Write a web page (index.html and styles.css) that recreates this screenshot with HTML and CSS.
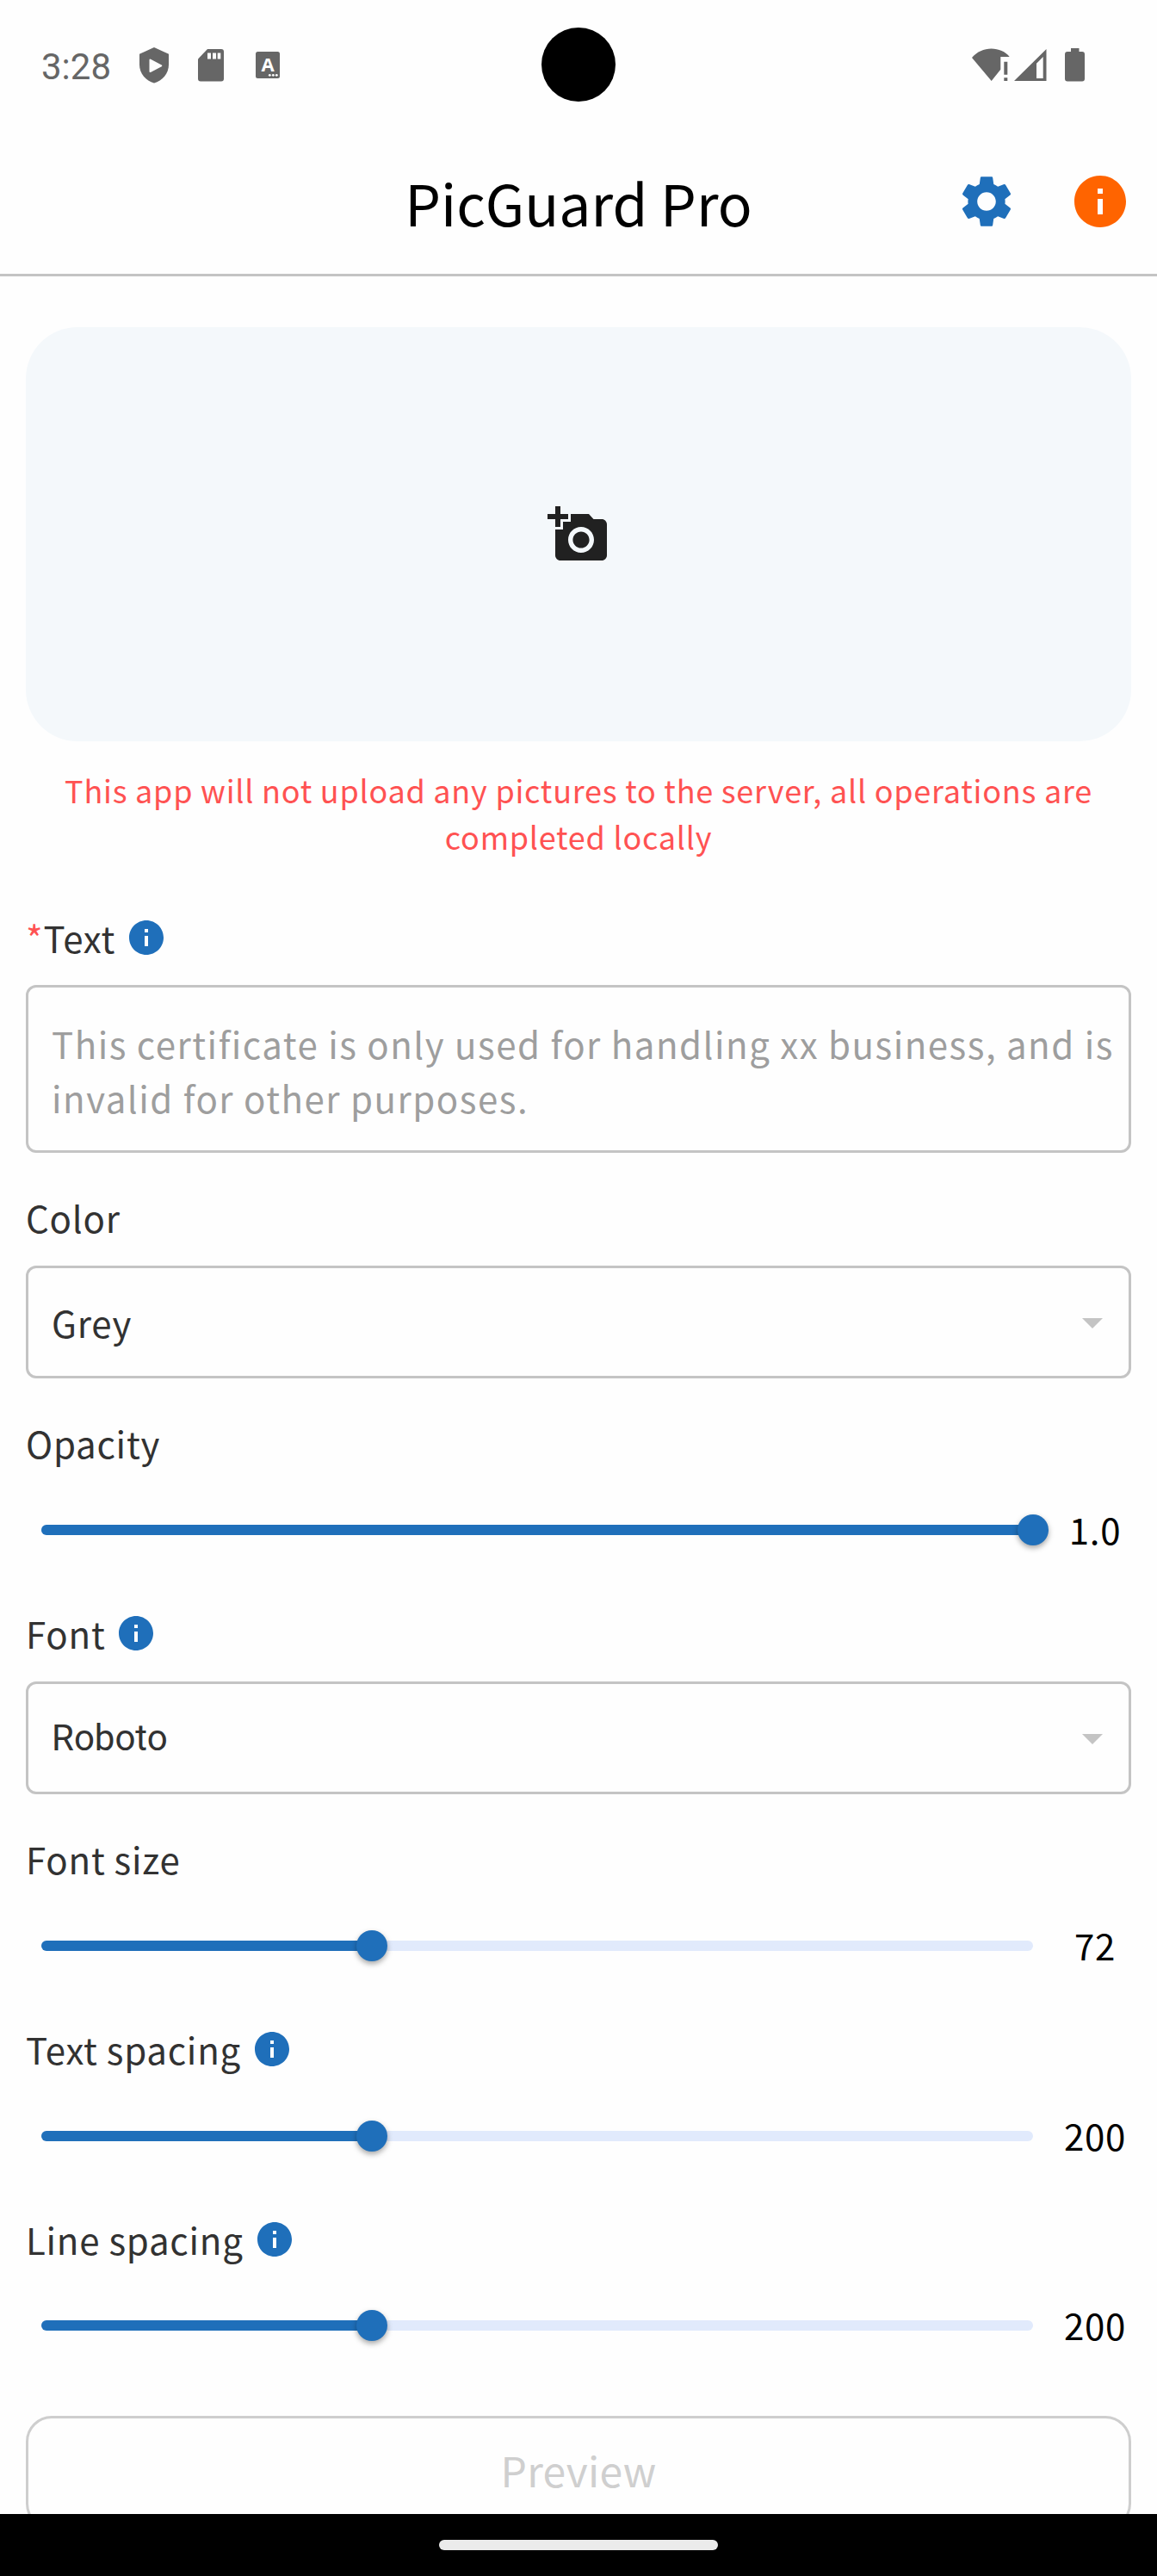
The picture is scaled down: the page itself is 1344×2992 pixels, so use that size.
FILE: index.html
```
<!DOCTYPE html>
<html lang="en">
<head>
<meta charset="utf-8">
<title>PicGuard Pro</title>
<link rel="stylesheet" href="styles.css">
</head>
<body>
<svg class="defs" aria-hidden="true">
  <symbol id="info" viewBox="0 0 24 24"><path d="M12 2C6.48 2 2 6.48 2 12s4.48 10 10 10 10-4.48 10-10S17.52 2 12 2zm1 15h-2v-6h2v6zm0-8h-2V7h2v2z"/></symbol>
  <symbol id="gear" viewBox="0 0 24 24"><path d="M19.14,12.94c0.04-0.3,0.06-0.61,0.06-0.94c0-0.32-0.02-0.64-0.07-0.94l2.03-1.58c0.18-0.14,0.23-0.41,0.12-0.61l-1.92-3.32c-0.12-0.22-0.37-0.29-0.59-0.22l-2.39,0.96c-0.5-0.38-1.03-0.7-1.62-0.94L14.4,2.81c-0.04-0.24-0.24-0.41-0.48-0.41h-3.84c-0.24,0-0.43,0.17-0.47,0.41L9.25,5.35C8.66,5.59,8.12,5.92,7.63,6.29L5.24,5.33c-0.22-0.08-0.47,0-0.59,0.22L2.74,8.87C2.62,9.08,2.66,9.34,2.86,9.48l2.03,1.58C4.84,11.36,4.8,11.69,4.8,12s0.02,0.64,0.07,0.94l-2.03,1.58c-0.18,0.14-0.23,0.41-0.12,0.61l1.92,3.32c0.12,0.22,0.37,0.29,0.59,0.22l2.39-0.96c0.5,0.38,1.03,0.7,1.62,0.94l0.36,2.54c0.05,0.24,0.24,0.41,0.48,0.41h3.84c0.24,0,0.44-0.17,0.47-0.41l0.36-2.54c0.59-0.24,1.13-0.56,1.62-0.94l2.39,0.96c0.22,0.08,0.47,0,0.59-0.22l1.92-3.32c0.12-0.22,0.07-0.47-0.12-0.61L19.14,12.94z M12,15.6c-1.98,0-3.6-1.62-3.6-3.6s1.62-3.6,3.6-3.6s3.6,1.62,3.6,3.6S13.98,15.6,12,15.6z"/></symbol>
  <symbol id="add-photo" viewBox="0 0 24 24"><path d="M3 4V1h2v3h3v2H5v3H3V6H0V4h3zm3 6V7h3V4h7l1.83 2H21c1.1 0 2 .9 2 2v12c0 1.1-.9 2-2 2H5c-1.1 0-2-.9-2-2V10h3zm7 9c2.76 0 5-2.24 5-5s-2.24-5-5-5-5 2.24-5 5 2.24 5 5 5zm-3.2-5c0 1.77 1.43 3.2 3.2 3.2s3.2-1.43 3.2-3.2-1.43-3.2-3.2-3.2-3.2 1.43-3.2 3.2z"/></symbol>
  <symbol id="caret" viewBox="0 0 24 12"><path d="M0 0h24L12 12z"/></symbol>
</svg>

<div class="statusbar">
  <span class="clock">3:28</span>
  <svg class="shield" width="34" height="42" viewBox="0 0 34 42"><path d="M17 0L34 7.8V20C34 30.500 26.500 39 17 41.500C7.500 39 0 30.500 0 20V7.800Z"/><path class="cutout" d="M12.500 14.600L25.300 21.300L12.500 28Z"/></svg>
  <svg class="sdcard" width="30" height="38" viewBox="0 0 30 38"><path d="M11 0H27a3 3 0 0 1 3 3V34.500a3 3 0 0 1-3 3H3a3 3 0 0 1-3-3V11.500Z"/><path class="hole" d="M11 4.500h4v7h-4zM17 4.500h4v7h-4zM22.700 4.500h3.600v7h-3.600z"/></svg>
  <svg class="keyboard" width="28" height="31" viewBox="0 0 28 31"><rect width="28" height="31" rx="2.500"/><text class="key" x="14" y="23" text-anchor="middle">A</text><g class="hole"><circle cx="16.300" cy="27.300" r="1.400"/><circle cx="20.300" cy="27.300" r="1.400"/><circle cx="24.300" cy="27.300" r="1.400"/></g></svg>
  <span class="camera"></span>
  <svg class="wifi" width="44" height="39" viewBox="0 0 44 39"><path d="M22.700 38L0 11C6 4 14 .5 22.500 .5S39 4 43.700 10H33.300V24.700Z"/><path d="M37.300 15.700h4v15h-4zM37.300 34.300h4V38h-4z"/></svg>
  <svg class="signal" width="38" height="39" viewBox="0 0 38 39"><path fill-rule="evenodd" d="M0 38L37.500 1V38ZM26 17.700V35h7.700V10Z"/></svg>
  <svg class="battery" width="23" height="39" viewBox="0 0 23 39"><path d="M7 0h9.500v4H20a3 3 0 0 1 3 3V35.500a3 3 0 0 1-3 3H3a3 3 0 0 1-3-3V7a3 3 0 0 1 3-3h4z"/></svg>
</div>

<header class="appbar">
  <h1 class="title">PicGuard Pro</h1>
  <div class="actions">
    <svg class="action settings"><use href="#gear"/></svg>
    <svg class="action about"><use href="#info"/></svg>
  </div>
</header>

<main class="content">
  <div class="picker"><svg class="picker-icon"><use href="#add-photo"/></svg></div>
  <p class="notice">This app will not upload any pictures to the server, all operations are completed locally</p>

  <section class="field">
    <div class="label"><span class="required">*</span>Text<svg class="hint-icon"><use href="#info"/></svg></div>
    <div class="textarea">This certificate is only used for handling xx business, and is invalid for other purposes.</div>
  </section>

  <section class="field">
    <div class="label">Color</div>
    <div class="select"><span>Grey</span><svg class="caret"><use href="#caret"/></svg></div>
  </section>

  <section class="field">
    <div class="label">Opacity</div>
    <div class="slider">
      <div class="track"><div class="fill" style="width:100%"></div><div class="thumb"></div></div>
      <span class="value">1.0</span>
    </div>
  </section>

  <section class="field">
    <div class="label">Font<svg class="hint-icon"><use href="#info"/></svg></div>
    <div class="select"><span class="face-roboto">Roboto</span><svg class="caret"><use href="#caret"/></svg></div>
  </section>

  <section class="field">
    <div class="label">Font size</div>
    <div class="slider">
      <div class="track"><div class="fill" style="width:33.333%"></div><div class="thumb"></div></div>
      <span class="value">72</span>
    </div>
  </section>

  <section class="field">
    <div class="label">Text spacing<svg class="hint-icon"><use href="#info"/></svg></div>
    <div class="slider">
      <div class="track"><div class="fill" style="width:33.333%"></div><div class="thumb"></div></div>
      <span class="value">200</span>
    </div>
  </section>

  <section class="field">
    <div class="label">Line spacing<svg class="hint-icon"><use href="#info"/></svg></div>
    <div class="slider last">
      <div class="track"><div class="fill" style="width:33.333%"></div><div class="thumb"></div></div>
      <span class="value">200</span>
    </div>
  </section>

  <div class="preview">Preview</div>
</main>

<nav class="navbar"><span class="pill"></span></nav>
</body>
</html>
```
FILE: styles.css
```
* {
  box-sizing: border-box;
}

body {
  margin: 0;
  width: 1344px;
  height: 2992px;
  display: flex;
  flex-direction: column;
  overflow: hidden;
  background: #fefefe;
  color: #323232;
  font: 42px/60px "Noto Sans CJK SC", "Noto Sans", sans-serif;
  letter-spacing: 0.75px;
}

svg {
  display: block;
  flex: none;
}

.defs {
  position: absolute;
  width: 0;
  height: 0;
}

/* System status bar */
.statusbar {
  position: relative;
  flex: none;
  height: 153px;
  padding: 0 84px 2px 48px;
  display: flex;
  align-items: center;
  fill: #666;
  color: #666;
}

.clock {
  width: 114px;
  font: 42px/48px Roboto, sans-serif;
  letter-spacing: 0;
  padding-top: 4px;
}

.sdcard {
  margin-left: 34px;
}

.keyboard {
  margin-left: 37px;
}

.wifi {
  margin-left: auto;
}

.signal {
  margin-left: 5px;
}

.battery {
  margin-left: 21px;
}

.hole {
  fill: #fefefe;
}

.cutout {
  fill: #fefefe;
  stroke: #fefefe;
  stroke-width: 2px;
  stroke-linejoin: round;
}

.key {
  fill: #fefefe;
  font: 700 22px "Open Sans", sans-serif;
  letter-spacing: 0;
}

.camera {
  position: absolute;
  left: 629px;
  top: 32px;
  width: 86px;
  height: 86px;
  border-radius: 50%;
  background: #000;
}

/* App bar */
.appbar {
  flex: none;
  height: 168px;
  padding: 0 30px;
  border-bottom: 3px solid #c4c4c4;
  display: grid;
  grid-template-columns: 1fr auto 1fr;
  align-items: center;
}

.title {
  grid-column: 2;
  margin: 0;
  padding-bottom: 3px;
  font-size: 66px;
  line-height: 96px;
  font-weight: 400;
  letter-spacing: 0;
  color: #000;
}

.actions {
  display: flex;
  justify-content: flex-end;
  gap: 60px;
  padding-bottom: 3px;
}

.action {
  width: 72px;
  height: 72px;
}

.settings {
  fill: #1f6fba;
}

.about {
  fill: #ff6400;
}

/* Form */
.content {
  flex: 1;
  min-height: 0;
  overflow: hidden;
  padding: 59px 30px 0;
}

.picker {
  height: 481px;
  border-radius: 60px;
  background: #f4f8fb;
  display: flex;
  align-items: center;
  justify-content: center;
}

.picker-icon {
  width: 72px;
  height: 72px;
  fill: #212121;
}

.notice {
  margin: 29px 0 61px;
  font-size: 36px;
  line-height: 54px;
  text-align: center;
  color: #ff5252;
}

.field {
  margin-bottom: 45px;
}

.field:has(.slider) {
  margin-bottom: 19px;
}

.label {
  height: 60px;
  display: flex;
  align-items: center;
  margin-bottom: 26px;
}

.field:has(.slider) .label {
  margin-bottom: 0;
}

.field:has(.textarea) .label {
  margin-bottom: 25px;
}

.required {
  color: #ff5252;
}

.hint-icon {
  width: 48px;
  height: 48px;
  margin-left: 12px;
  fill: #1f6fba;
}

.textarea,
.select {
  border: 3px solid #c4c4c4;
  border-radius: 12px;
}

.textarea {
  height: 195px;
  padding: 33px 12px 0 27px;
  line-height: 63px;
  letter-spacing: 1.5px;
  color: #9e9e9e;
}

.select {
  height: 131px;
  padding: 0 30px 0 27px;
  display: flex;
  align-items: center;
  justify-content: space-between;
}

.face-roboto {
  font-family: Roboto, sans-serif;
  letter-spacing: 0;
}

.caret {
  width: 24px;
  height: 12px;
  margin-top: 3px;
  fill: #c4c4c4;
}

.slider {
  height: 142px;
  padding-left: 18px;
  display: flex;
  align-items: center;
  gap: 30px;
}

.slider.last {
  height: 140px;
}

.track {
  flex: 1;
  height: 12px;
  border-radius: 6px;
  background: #e1eafc;
  display: flex;
  align-items: center;
}

.fill {
  flex: none;
  height: 12px;
  border-radius: 6px;
  background: #1f6fba;
}

.thumb {
  flex: none;
  width: 36px;
  height: 36px;
  margin: 0 -18px;
  border-radius: 50%;
  background: #1f6fba;
  box-shadow: 0 3px 6px rgba(0, 0, 0, 0.35);
}

.value {
  width: 84px;
  padding-bottom: 2px;
  text-align: center;
  white-space: nowrap;
  color: #000;
}

.preview {
  margin-top: 35px;
  height: 132px;
  border: 3px solid #cecece;
  border-radius: 30px;
  text-align: center;
  font-size: 48px;
  line-height: 118px;
  letter-spacing: 0.3px;
  color: #cfcfcf;
}

/* System gesture bar */
.navbar {
  flex: none;
  height: 72px;
  background: #000;
  display: flex;
  align-items: center;
  justify-content: center;
}

.pill {
  width: 324px;
  height: 12px;
  border-radius: 6px;
  background: #ebebeb;
}
```
